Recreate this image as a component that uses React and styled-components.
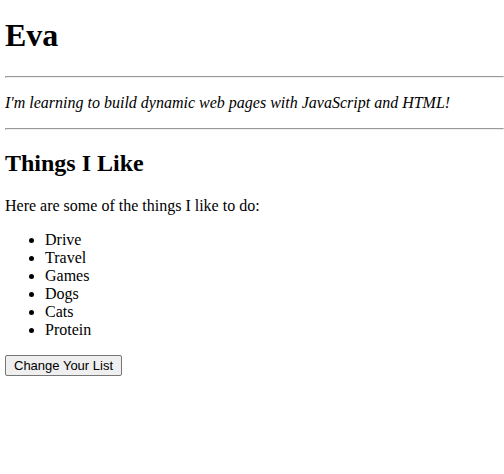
import React, { useState } from "react";
import styled, { createGlobalStyle } from "styled-components";

const GlobalStyle = createGlobalStyle`
  body {
    margin: 0;
    background: #fff;
    color: #000;
    font-family: "Liberation Serif", "Times New Roman", serif;
    font-size: 16px;
    line-height: 18px;
  }
`;

const Page = styled.main`
  padding: 17px 0 17px 5px;
`;

const Name = styled.h1`
  margin: 0 0 22px;
  font-size: 32px;
  line-height: 37px;
`;

const Rule = styled.hr`
  margin: 0;
  border: 1px solid;
  border-color: #9a9a9a #eee #eee #9a9a9a;
`;

const Intro = styled.p`
  margin: 16px 0;
  font-style: italic;
`;

const Heading = styled.h2`
  margin: 20px 0;
  font-size: 24px;
  line-height: 27px;
`;

const Lead = styled.p`
  margin: 0 0 16px;
`;

const List = styled.ul`
  margin: 0 0 16px;
  padding: 0 0 0 40px;
`;

const ChangeButton = styled.button`
  display: block;
  margin: 0;
  padding: 1px 8px;
  border: 1px solid #767676;
  border-radius: 2px;
  background: #efefef;
  color: #000;
  font-family: "Liberation Sans", Arial, sans-serif;
  font-size: 13px;
  line-height: 17px;
`;

const initialThings = ["Drive", "Travel", "Games", "Dogs", "Cats", "Protein"];

export default function App() {
  const [things, setThings] = useState(initialThings);

  const changeList = () => {
    const answer = window.prompt("What do you like to do?", things.join(", "));
    if (answer) setThings(answer.split(",").map((thing) => thing.trim()));
  };

  return (
    <>
      <GlobalStyle />
      <Page>
        <Name>Eva</Name>
        <Rule />
        <Intro>I'm learning to build dynamic web pages with JavaScript and HTML!</Intro>
        <Rule />
        <Heading>Things I Like</Heading>
        <Lead>Here are some of the things I like to do:</Lead>
        <List>
          {things.map((thing, index) => (
            <li key={index}>{thing}</li>
          ))}
        </List>
        <ChangeButton type="button" onClick={changeList}>
          Change Your List
        </ChangeButton>
      </Page>
    </>
  );
}
